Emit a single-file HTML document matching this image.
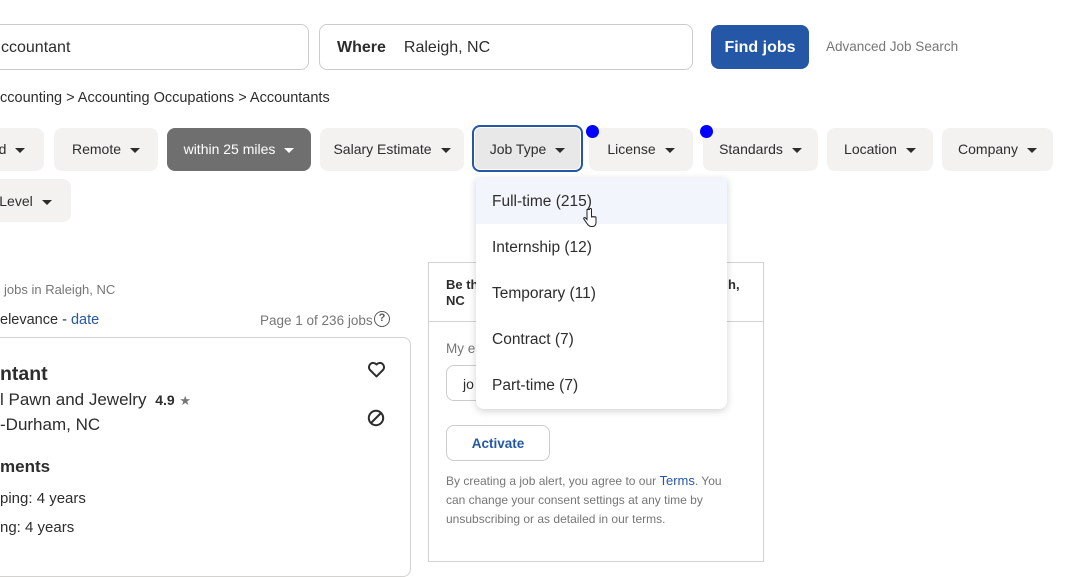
<!DOCTYPE html>
<html><head><meta charset="utf-8"><style>
*{box-sizing:border-box;margin:0;padding:0}
body{width:1068px;height:541px;overflow:hidden;background:#fff;font-family:"Liberation Sans",sans-serif;color:#2d2d2d;position:relative}
.a{position:absolute;white-space:nowrap}
.inp{position:absolute;border:1px solid #ccc;border-radius:8px;height:46px;top:24px;font-size:16px;line-height:46px}
.chip{position:absolute;height:43px;border-radius:8px;background:#f3f2f1;font-size:14px;color:#2d2d2d;line-height:43px;text-align:center}
.car{display:inline-block;width:0;height:0;border-left:5px solid transparent;border-right:5px solid transparent;border-top:5px solid #2d2d2d;vertical-align:middle;margin-left:9px}
.dot{position:absolute;width:13px;height:13px;border-radius:50%;background:#0000ff}
.dd{position:absolute;left:476px;top:178px;width:251px;height:231px;background:#fff;border-radius:0 0 8px 8px;box-shadow:0 2px 8px rgba(0,0,0,.18)}
.dd div{height:46px;line-height:48px;padding-left:16px;font-size:15.5px;color:#2d2d2d}
</style></head><body>
<div class="inp" style="left:-10px;width:319px;padding-left:10px">ccountant</div>
<div class="inp" style="left:319px;width:374px;padding-left:17px"><b>Where</b><span style="margin-left:18px">Raleigh, NC</span></div>
<div class="a" style="left:711px;top:25px;width:98px;height:44px;background:#2557a7;border-radius:8px;color:#fff;font-weight:bold;font-size:16px;line-height:45px;text-align:center">Find jobs</div>
<div class="a" style="left:826px;top:39px;font-size:13.5px;color:#767676">Advanced Job Search</div>
<div class="a" style="left:0;top:90px;font-size:14.5px">ccounting &gt; Accounting Occupations &gt; Accountants</div>

<div class="chip" style="left:-20px;width:64px;top:128px">d<span class="car"></span></div>
<div class="chip" style="left:54px;width:104px;top:128px">Remote<span class="car"></span></div>
<div class="chip" style="left:167px;width:144px;top:128px;background:#6f6f6f;color:#fff">within 25 miles<span class="car" style="border-top-color:#fff"></span></div>
<div class="chip" style="left:320px;width:144px;top:128px">Salary Estimate<span class="car"></span></div>
<div class="chip" style="left:472px;width:111px;top:125px;height:47px;border:2px solid #2557a7;box-shadow:inset 0 0 0 1px #fff;line-height:45px;background:#e8e8e8">Job Type<span class="car"></span></div>
<div class="chip" style="left:589px;width:104px;top:128px">License<span class="car"></span></div>
<div class="chip" style="left:703px;width:115px;top:128px">Standards<span class="car"></span></div>
<div class="chip" style="left:827px;width:106px;top:128px">Location<span class="car"></span></div>
<div class="chip" style="left:942px;width:111px;top:128px">Company<span class="car"></span></div>
<div class="chip" style="left:-20px;width:91px;top:179px;line-height:45px">Level<span class="car"></span></div>
<div class="dot" style="left:586px;top:125px"></div>
<div class="dot" style="left:700px;top:125px"></div>

<div class="a" style="left:4px;top:282px;font-size:13px;color:#767676">jobs in Raleigh, NC</div>
<div class="a" style="left:0;top:312px;font-size:14.5px;color:#2d2d2d">elevance - <span style="color:#2557a7">date</span></div>
<div class="a" style="left:260px;top:313px;font-size:13.5px;color:#767676">Page 1 of 236 jobs</div>
<div class="a" style="left:374px;top:311px;width:16px;height:16px;border:1.6px solid #595959;border-radius:50%;font-size:11px;line-height:13px;text-align:center;font-weight:bold;color:#595959">?</div>

<div class="a" style="left:-20px;top:337px;width:431px;height:240px;border:1px solid #d4d2d0;border-radius:8px"></div>
<div class="a" style="left:0;top:363px;font-size:19.5px;font-weight:bold">ntant</div>
<div class="a" style="left:0;top:390px;font-size:17px">l Pawn and Jewelry <span style="font-size:14px;font-weight:bold;margin-left:4px">4.9</span> <span style="color:#767676;font-size:13px">★</span></div>
<div class="a" style="left:0;top:415px;font-size:17px">-Durham, NC</div>
<div class="a" style="left:0;top:457px;font-size:17px;font-weight:bold">ments</div>
<div class="a" style="left:0;top:490px;font-size:15px">ping: 4 years</div>
<div class="a" style="left:0;top:519px;font-size:15px">ng: 4 years</div>
<svg class="a" style="left:367px;top:361px" width="19" height="17" viewBox="0 0 24 22"><path d="M12 20 L3.5 11.5 A5 5 0 0 1 12 4.5 A5 5 0 0 1 20.5 11.5 Z" fill="none" stroke="#2d2d2d" stroke-width="2.6" stroke-linejoin="round"/></svg>
<svg class="a" style="left:367px;top:409px" width="18" height="18" viewBox="0 0 18 18"><circle cx="9" cy="9" r="7.2" fill="none" stroke="#2d2d2d" stroke-width="2"/><path d="M4 14L14 4" stroke="#2d2d2d" stroke-width="2"/></svg>

<div class="a" style="left:428px;top:262px;width:336px;height:300px;border:1px solid #d4d2d0"></div>
<div class="a" style="left:428px;top:321px;width:336px;border-top:1px solid #d4d2d0"></div>
<div class="a" style="left:446px;top:277px;font-size:13px;font-weight:bold;line-height:16px">Be th<br>NC</div>
<div class="a" style="left:728px;top:277px;font-size:13px;font-weight:bold">h,</div>
<div class="a" style="left:446px;top:341px;font-size:13.5px;color:#767676">My e</div>
<div class="a" style="left:446px;top:365px;width:60px;height:36px;border:1px solid #ccc;border-radius:8px;font-size:14px;line-height:36px;padding-left:16px">jo</div>
<div class="a" style="left:446px;top:425px;width:104px;height:36px;border:1px solid #ccc;border-radius:8px;font-size:13.5px;line-height:36px;text-align:center;color:#2557a7;font-weight:bold">Activate</div>
<div class="a" style="left:446px;top:471px;font-size:12px;color:#767676;line-height:19px">By creating a job alert, you agree to our <span style="color:#2557a7;font-size:13px">Terms</span>. You<br>can change your consent settings at any time by<br>unsubscribing or as detailed in our terms.</div>

<div class="dd">
<div style="background:#f3f5fd">Full-time (215)</div>
<div>Internship (12)</div>
<div>Temporary (11)</div>
<div>Contract (7)</div>
<div>Part-time (7)</div>
</div>
<svg class="a" style="left:583px;top:208px" width="14" height="20" viewBox="0 0 14 20"><path d="M4 1.5v10l-1.5-1.5c-1-1-2.5 0-1.5 1.2l3.5 5c1 1.5 2 2.3 4 2.3h1c2 0 3.5-1.5 3.5-3.5V9.5c0-1-1.5-1-1.5 0 0-1.2-1.5-1.2-1.5 0 0-1.2-1.5-1.2-1.5 0V1.5c0-1.3-2-1.3-2 0z" fill="#fff" stroke="#222" stroke-width="1"/></svg>
</body></html>
